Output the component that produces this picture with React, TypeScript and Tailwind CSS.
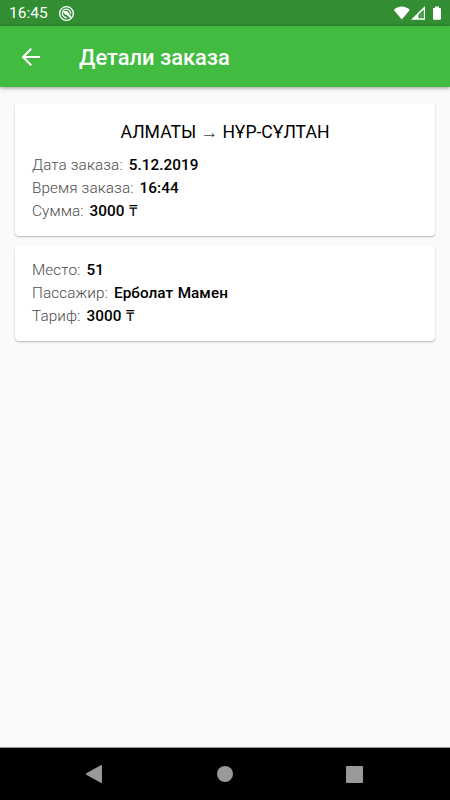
type Row = {
  label: string;
  value: string;
};

const orderRows: Row[] = [
  { label: "Дата заказа:", value: "5.12.2019" },
  { label: "Время заказа:", value: "16:44" },
  { label: "Сумма:", value: "3000 ₸" },
];

const ticketRows: Row[] = [
  { label: "Место:", value: "51" },
  { label: "Пассажир:", value: "Ерболат Мамен" },
  { label: "Тариф:", value: "3000 ₸" },
];

function DetailRow({ label, value }: Row) {
  return (
    <div className="flex h-[23px] items-center gap-[6px] text-[15.3px] whitespace-pre">
      <span className="font-light tracking-[0.1px] text-[#4c4c4c]">{label}</span>
      <span className="font-medium tracking-[0.05px] text-black [word-spacing:0.6px]">{value}</span>
    </div>
  );
}

function StatusBar() {
  return (
    <div className="flex h-[26px] shrink-0 items-center bg-[#338d32] pr-[9px] pl-[9px] text-white">
      <span className="mt-[2px] text-[15.5px] leading-none">16:45</span>
      <svg className="ml-[10px]" width="17" height="17" viewBox="0 0 17 17" fill="none">
        <circle cx="8.5" cy="8.5" r="6.9" stroke="currentColor" strokeWidth="1.4" />
        <path d="M8.9 12.6A4.2 4.2 0 1 1 12.7 8.7" stroke="currentColor" strokeWidth="1.3" />
        <path d="M5.4 7.6C6.6 5.4 9.3 5.8 10.2 7.3L13.6 12L12.2 13.2L8.6 9.7L7 9.4Z" fill="currentColor" />
      </svg>
      <svg className="ml-auto" width="48" height="18" viewBox="0 0 48 18" fill="currentColor">
        {/* wifi */}
        <path d="M0.8 6.1C4.8 1.2 12.7 1.2 16.8 6.1L8.8 15.4Z" />
        {/* signal */}
        <path fillRule="evenodd" d="M18 15.7L32 2V15.7ZM25.5 14.3H30.8V5.6L25.5 10.8Z" />
        <path d="M27 13.2V11L29.5 8.6V13.2Z" fillOpacity="0.25" />
        {/* battery */}
        <path d="M40 4H42V2.6H46V4H47Q48 4 48 5V14.7Q48 15.7 47 15.7H41Q40 15.7 40 14.7V4Z" />
      </svg>
    </div>
  );
}

export default function App() {
  return (
    <div className="flex h-[800px] w-[450px] flex-col overflow-hidden bg-[#fafafa] font-[Roboto,sans-serif]">
      <StatusBar />

      {/* HEADER */}
      <header className="flex h-[61px] shrink-0 items-center bg-[#42bb41] pl-[21px] text-white shadow-[0_1px_4px_rgba(0,0,0,0.4)]">
        <button aria-label="Назад">
          <svg width="20" height="20" viewBox="0 0 20 20" fill="none" stroke="currentColor" strokeWidth="2">
            <path d="M19 10H2.5M10.2 1.8L2 10L10.2 18.2" />
          </svg>
        </button>
        <h1 className="mt-[3px] ml-[38px] text-[21.9px] font-medium">Детали заказа</h1>
      </header>

      {/* CARDS */}
      <main className="flex flex-1 flex-col gap-[9px] px-[15px] pt-[16px]">
        <section className="h-[133px] rounded-[4px] bg-white px-[17px] pt-[17px] shadow-[0_1px_2px_rgba(0,0,0,0.28)]">
          <h2 className="mb-[9px] flex h-[25px] items-center justify-center text-[17.6px] whitespace-pre text-black">
            АЛМАТЫ <span className="text-[#444]">→</span> НҰР-СҰЛТАН
          </h2>
          {orderRows.map((row) => (
            <DetailRow key={row.label} {...row} />
          ))}
        </section>

        <section className="h-[96px] rounded-[4px] bg-white px-[17px] pt-[14px] shadow-[0_1px_2px_rgba(0,0,0,0.28)]">
          {ticketRows.map((row) => (
            <DetailRow key={row.label} {...row} />
          ))}
        </section>
      </main>

      {/* NAVIGATION */}
      <nav className="flex h-[53px] shrink-0 items-center justify-between border-t border-[#999] bg-black pr-[87px] pl-[86px]">
        <svg width="16" height="18" viewBox="0 0 16 18" fill="#999">
          <path d="M0.3 8.3L14.7 0.2Q16 -0.2 16 1V17Q16 18.2 14.7 17.8L0.3 9.7Q-0.3 9 0.3 8.3Z" />
        </svg>
        <div className="ml-px h-4 w-4 rounded-full bg-[#999]" />
        <div className="h-[17px] w-[17px] rounded-[1px] bg-[#999]" />
      </nav>
    </div>
  );
}
